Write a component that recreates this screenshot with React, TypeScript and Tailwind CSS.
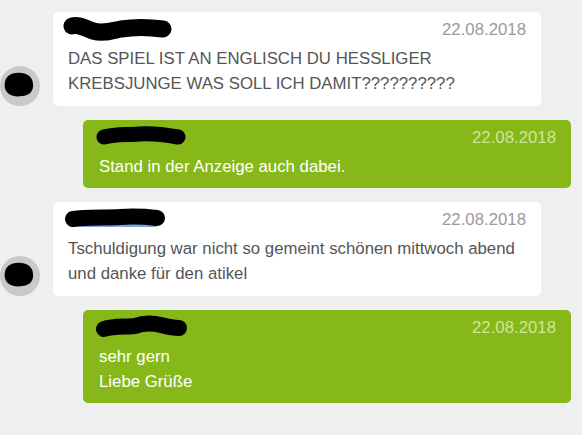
import React from "react";

const font = { fontFamily: '"Liberation Sans", Arial, sans-serif' };

function Avatar() {
  return (
    <div className="w-[40px] h-[40px] rounded-full bg-[#c9c9c9] shrink-0 flex items-center justify-center">
      <svg width="40" height="40" viewBox="0 0 40 40">
        <path
          d="M5 16 C6 9 14 6 21 7 C28 7 33 12 33 18 C34 25 29 30 22 30 C17 31 12 30 9 28 C5 25 4 20 5 16 Z"
          fill="#000"
        />
      </svg>
    </div>
  );
}

function Scribble({ w, h, d, sw }: { w: number; h: number; d: string; sw: number }) {
  return (
    <svg width={w} height={h} viewBox={`0 0 ${w} ${h}`} className="absolute left-0 top-0">
      <path d={d} fill="none" stroke="#000" strokeWidth={sw} strokeLinecap="round" strokeLinejoin="round" />
    </svg>
  );
}

function WhiteBubble({
  lines,
  scribble,
}: {
  lines: string[];
  scribble: React.ReactNode;
}) {
  return (
    <div className="flex items-end gap-[13px]">
      <Avatar />
      <div className="relative w-[488px] bg-white rounded-[5px] pt-[9px] px-[15px] pb-[10px]">
        {scribble}
        <div className="h-[25px] flex justify-end">
          <span className="text-[16.8px] leading-[18px] text-[#9a9a9a]">22.08.2018</span>
        </div>
        {lines.map((l, i) => (
          <div key={i} className="text-[16.8px] leading-[25px] text-[#555]">
            {l}
          </div>
        ))}
      </div>
    </div>
  );
}

function GreenBubble({
  lines,
  scribble,
}: {
  lines: string[];
  scribble: React.ReactNode;
}) {
  return (
    <div className="flex pl-[83px]">
      <div className="relative w-[488px] bg-[#87b81a] rounded-[5px] pt-[9px] pl-[16px] pr-[15px] pb-[9px]">
        {scribble}
        <div className="h-[25px] flex justify-end">
          <span className="text-[16.8px] leading-[18px] text-[#cfe69a]">22.08.2018</span>
        </div>
        {lines.map((l, i) => (
          <div key={i} className="text-[16.8px] leading-[25px] text-white">
            {l}
          </div>
        ))}
      </div>
    </div>
  );
}

export default function App() {
  return (
    <div className="w-[582px] h-[435px] bg-[#efefef] overflow-hidden pt-[12px]" style={font}>
      <div className="flex flex-col gap-[14px]">
        <WhiteBubble
          lines={["DAS SPIEL IST AN ENGLISCH DU HESSLIGER", "KREBSJUNGE WAS SOLL ICH DAMIT??????????"]}
          scribble={
            <div className="absolute left-[10px] top-[4px] w-[110px] h-[26px]">
              <Scribble w={110} h={26} sw={17} d="M9 10 C15 8 22 12 30 15 C40 18 48 15 58 13 C70 11 86 11 100 13" />
            </div>
          }
        />
        <GreenBubble
          lines={["Stand in der Anzeige auch dabei."]}
          scribble={
            <div className="absolute left-[12px] top-[6px] w-[92px] h-[20px]">
              <Scribble w={92} h={20} sw={15} d="M9 11 C20 8 32 9 44 8 C58 7 72 9 83 11" />
            </div>
          }
        />
        <WhiteBubble
          lines={["Tschuldigung war nicht so gemeint schönen mittwoch abend", "und danke für den atikel"]}
          scribble={
            <div className="absolute left-[11px] top-[5px] w-[102px] h-[22px]">
              <div className="absolute left-[12px] top-[17px] w-[80px] h-[3px] bg-[#7aa6dd]" />
              <Scribble w={102} h={22} sw={16} d="M9 12 C22 10 40 11 56 10 C70 9 84 10 93 11" />
            </div>
          }
        />
        <GreenBubble
          lines={["sehr gern", "Liebe Grüße"]}
          scribble={
            <div className="absolute left-[12px] top-[4px] w-[92px] h-[24px]">
              <Scribble w={92} h={24} sw={16} d="M9 15 C18 12 30 13 40 12 C48 9 58 9 66 11 C74 13 80 14 84 14" />
            </div>
          }
        />
      </div>
    </div>
  );
}
